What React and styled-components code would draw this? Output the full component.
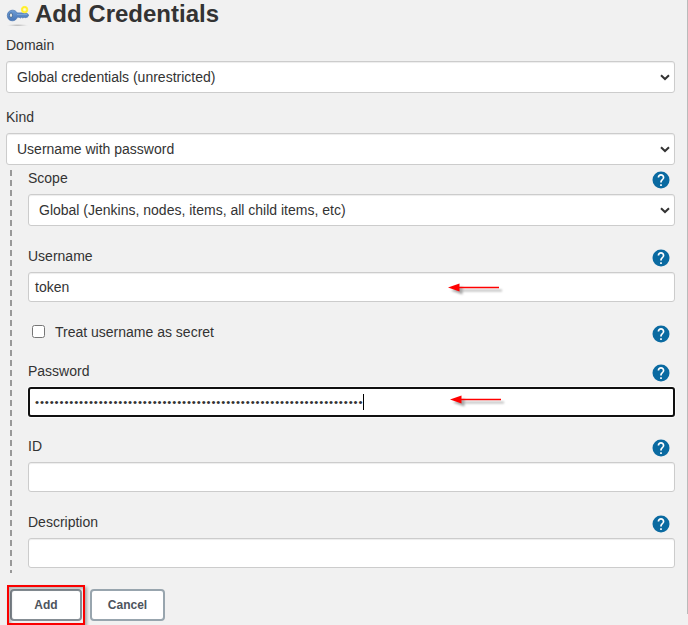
import React from "react";
import styled, { createGlobalStyle } from "styled-components";

const GlobalStyle = createGlobalStyle`
  * { box-sizing: border-box; }
  body {
    margin: 0;
    background: #f1f1f1;
    color: #333;
    font: 14px/20px "Liberation Sans", Arial, sans-serif;
    overflow: hidden;
  }
`;

const Page = styled.main`
  position: relative;
  height: 625px;
  padding-left: 6px;
  padding-right: 13px;
  overflow: hidden;
`;

const Edge = styled.div`
  position: absolute;
  top: 0;
  right: 0;
  width: 1px;
  height: 614px;
  background: #bababa;
`;

const Header = styled.header`
  display: flex;
  align-items: flex-start;
  height: 35px;
`;

const Title = styled.h1`
  margin: 0 0 0 5px;
  font-size: 24px;
  line-height: 28px;
  font-weight: 700;
  white-space: nowrap;
`;

const Field = styled.section`
  display: flex;
  flex-direction: column;
  margin-bottom: ${(p) => p.$gap ?? 0}px;
`;

const LabelRow = styled.div`
  display: flex;
  justify-content: space-between;
  height: ${(p) => p.$height}px;
  padding-right: 5px;
`;

const HelpSvg = styled.svg`
  display: block;
  flex: none;
  width: 18px;
  height: 18px;
  margin-top: 3px;
`;

const Control = styled.div`
  position: relative;
  display: flex;
  align-items: center;
  height: ${(p) => (p.$select ? 32 : 30)}px;
  padding: 0 4px 0 ${(p) => (p.$select ? 10 : 6)}px;
  border: 1px solid #ccc;
  border-radius: 3px;
  background: #fff;
  box-shadow: inset 0 1px 1px rgba(0, 0, 0, 0.075);
  white-space: nowrap;
  ${(p) =>
    p.$focused &&
    `
    padding: 0 3px 0 5px;
    border: 2px solid #101010;
    box-shadow: 0 0 0 1px #fafafa;
  `}
`;

const Value = styled.span`
  flex: 1;
`;

const Dots = styled.span`
  font-size: 11.5px;
  letter-spacing: 0.875px;
`;

const Caret = styled.span`
  width: 1px;
  height: 16px;
  background: #000;
`;

const Nested = styled.div`
  display: flex;
  height: 408px;
  padding: 3px 0 0 4px;
`;

const DashedRule = styled.div`
  width: 2px;
  height: 403px;
  margin-top: 2px;
  margin-right: 16px;
  background: repeating-linear-gradient(#999 0 6px, transparent 6px 10px);
`;

const NestedFields = styled.div`
  flex: 1;
`;

const CheckRow = styled.div`
  display: flex;
  align-items: flex-start;
  height: 39px;
  padding: 0 5px 0 4px;
`;

const Checkbox = styled.input`
  width: 13px;
  height: 13px;
  margin: 3px 10px 0 0;
`;

const CheckLabel = styled.label`
  flex: 1;
`;

const Actions = styled.footer`
  display: flex;
  gap: 8px;
  padding: 16px 0 0 4px;
`;

const AddSlot = styled.div`
  position: relative;
`;

const Button = styled.button`
  display: block;
  width: ${(p) => p.$width}px;
  height: 32px;
  padding: 0;
  border: 2px solid ${(p) => (p.$active ? "#858d94" : "#98a5ae")};
  border-radius: 4px;
  background: #fff;
  color: #4d545d;
  font: 700 12px/16px "Liberation Sans", Arial, sans-serif;
`;

const Highlight = styled.div`
  position: absolute;
  inset: -4px -3px;
  border: 2px solid #fb0000;
  box-shadow: 2px 2px 3px rgba(0, 0, 0, 0.3), inset 2px 2px 3px rgba(0, 0, 0, 0.25);
  pointer-events: none;
`;

const ArrowSvg = styled.svg`
  position: absolute;
  left: ${(p) => p.$left}px;
  top: ${(p) => p.$top}px;
  width: 60px;
  height: 18px;
  filter: drop-shadow(3px 3px 1px rgba(0, 0, 0, 0.35));
`;

const KeyIcon = () => (
  <svg width="24" height="28" viewBox="0 0 24 28">
    <defs>
      <linearGradient id="key" x2="0" y2="1">
        <stop stopColor="#6f9dd5" />
        <stop offset="1" stopColor="#4675b7" />
      </linearGradient>
      <radialGradient id="glow">
        <stop stopColor="#fffde0" />
        <stop offset=".3" stopColor="#fff5a0" />
        <stop offset=".55" stopColor="#ffee20" />
        <stop offset=".8" stopColor="#fff04a" />
        <stop offset="1" stopColor="#fff26a" stopOpacity="0" />
      </radialGradient>
      <radialGradient id="shade">
        <stop stopColor="#aaa" />
        <stop offset="1" stopColor="#ccc" stopOpacity="0" />
      </radialGradient>
    </defs>
    <ellipse cx="11.5" cy="25.2" rx="11" ry="1.2" fill="url(#shade)" />
    <path
      d="M6.4 10.2c2.3 0 3.8 1 4.7 2.7H20.5l2.3 2.2-1.6 2.3-1.2-.2-.9.7-1-.8-1.2 1-1.2-.9-1.3.9-1.3-.9h-1.8c-.8 2.3-2.5 3.6-4.9 3.6-3.2 0-5.1-2.3-5.1-5.3 0-3 2.1-5.3 5.1-5.3z"
      fill="url(#key)"
      stroke="#4776b0"
      strokeWidth=".7"
    />
    <path d="M11 14.5h10" stroke="#8aafdb" strokeWidth=".7" />
    <ellipse cx="5" cy="15.2" rx="1.6" ry="2.3" fill="#e7e7df" stroke="#345d90" strokeWidth=".8" />
    <circle cx="18.6" cy="9.6" r="4.2" fill="url(#glow)" />
  </svg>
);

const Help = () => (
  <HelpSvg viewBox="1.4 1.4 21.2 21.2">
    <circle cx="12" cy="12" r="10" fill="#0a6aa1" />
    <path
      fill="#fff"
      d="M13 19h-2v-2h2zm2.07-7.75-.9.92C13.45 12.9 13 13.5 13 15h-2v-.5c0-1.1.45-2.1 1.17-2.83l1.24-1.26c.37-.36.59-.86.59-1.41 0-1.1-.9-2-2-2s-2 .9-2 2H8c0-2.21 1.79-4 4-4s4 1.79 4 4c0 .88-.36 1.68-.93 2.25z"
    />
  </HelpSvg>
);

const Chevron = () => (
  <svg width="10" height="8" viewBox="0 0 10 8">
    <path d="M1 2.2 5 6l4-3.8" fill="none" stroke="#333" strokeWidth="2" />
  </svg>
);

const Arrow = ({ left, top }) => (
  <ArrowSvg $left={left} $top={top} viewBox="0 0 60 18">
    <path d="M10 8.5h41" stroke="#f00" strokeWidth="1.5" />
    <path d="M0 8.5 11.5 4.5v8z" fill="#f00" />
  </ArrowSvg>
);

const Select = ({ children }) => (
  <Control $select>
    <Value>{children}</Value>
    <Chevron />
  </Control>
);

export default function App() {
  return (
    <>
      <GlobalStyle />
      <Page>
        <Edge />
        <Header>
          <KeyIcon />
          <Title>Add Credentials</Title>
        </Header>
        <Field $gap={14}>
          <LabelRow $height={26}>Domain</LabelRow>
          <Select>Global credentials (unrestricted)</Select>
        </Field>
        <Field>
          <LabelRow $height={26}>Kind</LabelRow>
          <Select>Username with password</Select>
        </Field>
        <Nested>
          <DashedRule />
          <NestedFields>
            <Field $gap={20}>
              <LabelRow $height={26}>
                Scope
                <Help />
              </LabelRow>
              <Select>Global (Jenkins, nodes, items, all child items, etc)</Select>
            </Field>
            <Field $gap={20}>
              <LabelRow $height={26}>
                Username
                <Help />
              </LabelRow>
              <Control>
                token
                <Arrow left={419} top={6} />
              </Control>
            </Field>
            <CheckRow>
              <Checkbox type="checkbox" id="secret" />
              <CheckLabel htmlFor="secret">Treat username as secret</CheckLabel>
              <Help />
            </CheckRow>
            <Field $gap={19}>
              <LabelRow $height={26}>
                Password
                <Help />
              </LabelRow>
              <Control $focused>
                <Dots>{"•".repeat(67)}</Dots>
                <Caret />
                <Arrow left={420} top={2} />
              </Control>
            </Field>
            <Field $gap={20}>
              <LabelRow $height={26}>
                ID
                <Help />
              </LabelRow>
              <Control />
            </Field>
            <Field>
              <LabelRow $height={26}>
                Description
                <Help />
              </LabelRow>
              <Control />
            </Field>
          </NestedFields>
        </Nested>
        <Actions>
          <AddSlot>
            <Button $width={72} $active>Add</Button>
            <Highlight />
          </AddSlot>
          <Button $width={75}>Cancel</Button>
        </Actions>
      </Page>
    </>
  );
}
